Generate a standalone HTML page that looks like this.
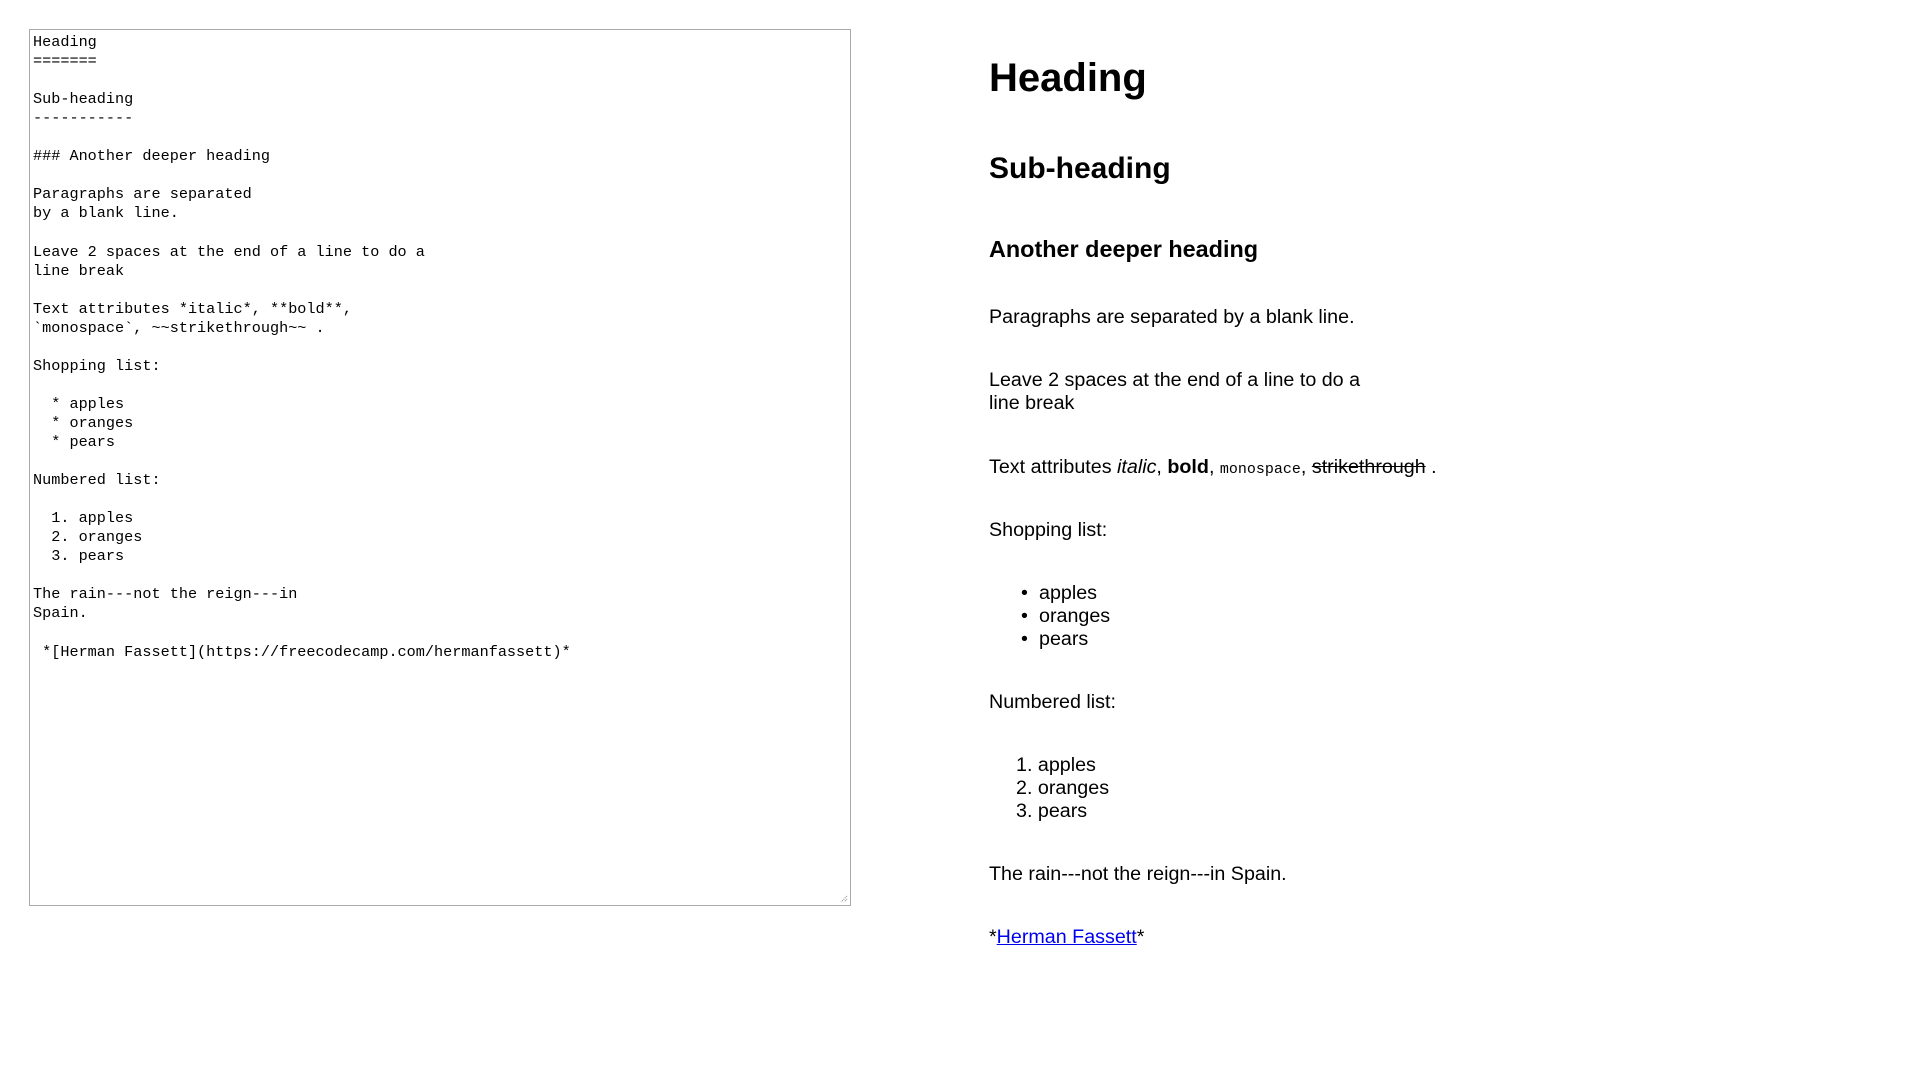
<!DOCTYPE html>
<html><head><meta charset="utf-8">
<style>
html,body{margin:0;padding:0;width:1920px;height:1080px;background:#fff;overflow:hidden;}
body{font-family:"Liberation Sans",Arial,sans-serif;color:#000;position:relative;}
.ta{position:absolute;left:29px;top:29px;width:820px;height:875px;border:1px solid #a9a9a9;background:#fff;}
.ta pre{margin:0;position:absolute;left:3px;top:3px;font-family:"Liberation Mono",monospace;font-size:15.2px;line-height:19.05px;color:#000;}
.grip{position:absolute;right:2px;bottom:2px;width:10px;height:10px;}
.r{position:absolute;left:989px;white-space:nowrap;line-height:normal;}
.p{font-size:19.7px;}
.h1{font-size:40px;font-weight:bold;}
.h2{font-size:30px;font-weight:bold;}
.h3{font-size:23.4px;font-weight:bold;}
code{font-family:"Liberation Mono",monospace;font-size:15px;}
a{color:#0000ee;text-decoration:underline;}
.b{display:inline-block;width:18px;}
</style></head><body>
<div class="ta"><pre>Heading
=======

Sub-heading
-----------

### Another deeper heading

Paragraphs are separated
by a blank line.

Leave 2 spaces at the end of a line to do a
line break

Text attributes *italic*, **bold**,
`monospace`, ~~strikethrough~~ .

Shopping list:

  * apples
  * oranges
  * pears

Numbered list:

  1. apples
  2. oranges
  3. pears

The rain---not the reign---in
Spain.

 *[Herman Fassett](https://freecodecamp.com/hermanfassett)*</pre>
<svg class="grip" viewBox="0 0 10 10"><path d="M9 3L3 9M9 6L6 9" stroke="#888" stroke-width="1" stroke-dasharray="1 1"/></svg>
</div>

<div class="r h1" style="top:56px">Heading</div>
<div class="r h2" style="top:152px">Sub-heading</div>
<div class="r h3" style="top:236px">Another deeper heading</div>
<div class="r p" style="top:306px">Paragraphs are separated by a blank line.</div>
<div class="r p" style="top:369px">Leave 2 spaces at the end of a line to do a</div>
<div class="r p" style="top:392px">line break</div>
<div class="r p" style="top:456px">Text attributes <i>italic</i>, <b>bold</b>, <code>monospace</code>, <s>strikethrough</s> .</div>
<div class="r p" style="top:519px">Shopping list:</div>
<div class="r p" style="top:582px;left:1021px"><span class="b">•</span>apples</div>
<div class="r p" style="top:605px;left:1021px"><span class="b">•</span>oranges</div>
<div class="r p" style="top:628px;left:1021px"><span class="b">•</span>pears</div>
<div class="r p" style="top:691px">Numbered list:</div>
<div class="r p" style="top:754px;left:1016px">1. apples</div>
<div class="r p" style="top:777px;left:1016px">2. oranges</div>
<div class="r p" style="top:800px;left:1016px">3. pears</div>
<div class="r p" style="top:863px">The rain---not the reign---in Spain.</div>
<div class="r p" style="top:926px">*<a>Herman Fassett</a>*</div>
</body></html>
